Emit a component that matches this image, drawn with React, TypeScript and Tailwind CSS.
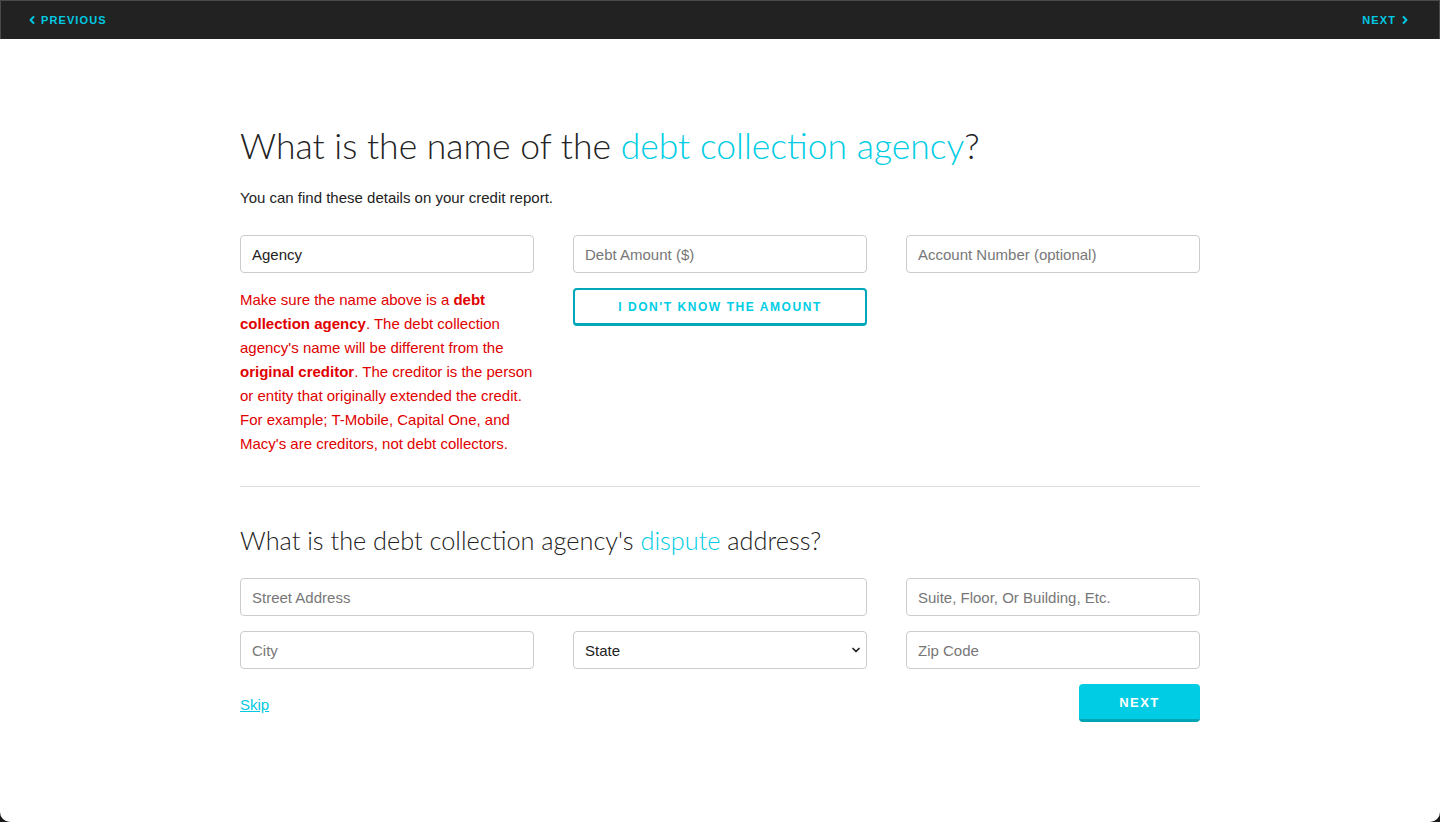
import { ChevronLeft, ChevronRight, ChevronDown } from 'lucide-react'

const body = { fontFamily: '"Liberation Sans", Arial, sans-serif' }
const display = { fontFamily: 'Lato, "Open Sans", sans-serif' }

const inputClass =
  'h-[38px] w-full rounded-[4px] border border-[#cccccc] bg-white px-[11px] text-[15px] text-[#222] placeholder:text-[#777] outline-none'

export default function App() {
  return (
    <div className="min-h-screen bg-[#1a1a1a]" style={body}>
      <div className="flex h-[822px] flex-col overflow-hidden rounded-b-[10px] bg-white">
        <nav className="flex h-[39px] shrink-0 items-center justify-between border-x border-t border-[#4a4a4a] bg-[#222222] pl-[25px] pr-[28px] text-[11px] font-bold uppercase tracking-[0.1em] text-[#00c9e2]">
          <a href="#" className="flex items-center gap-[3px]">
            <ChevronLeft className="h-3 w-3" strokeWidth={4} />
            Previous
          </a>
          <a href="#" className="flex items-center gap-[3px]">
            Next
            <ChevronRight className="h-3 w-3" strokeWidth={4} />
          </a>
        </nav>

        <main className="mx-auto w-[960px] pt-[87px]">
          <h1 className="text-[35.5px] font-light leading-[40px] text-[#222]" style={display}>
            What is the name of the <span className="text-[#00cde4]">debt collection agency</span>?
          </h1>
          <p className="mt-[22px] text-[15px] leading-[20px] text-[#222]">
            You can find these details on your credit report.
          </p>

          <div className="mt-[27px] grid grid-cols-3 gap-x-[39px]">
            <div>
              <input className={inputClass} defaultValue="Agency" />
              <p className="mt-[15px] text-[15px] leading-[24px] text-[#e00000]">
                Make sure the name above is a <strong>debt collection agency</strong>. The debt collection
                agency's name will be different from the <strong>original creditor</strong>. The creditor is
                the person or entity that originally extended the credit. For example; T-Mobile, Capital One,
                and Macy's are creditors, not debt collectors.
              </p>
            </div>
            <div>
              <input className={inputClass} placeholder="Debt Amount ($)" />
              <button className="mt-[15px] h-[38px] w-full rounded-[4px] border-2 border-b-[3px] border-[#00a8b8] bg-white pt-[1px] text-[12px] font-bold uppercase tracking-[0.13em] text-[#00cde4]">
                I don't know the amount
              </button>
            </div>
            <div>
              <input className={inputClass} placeholder="Account Number (optional)" />
            </div>
          </div>

          <hr className="mt-[30px] border-t border-[#dddddd]" />

          <h2 className="mt-[37px] text-[25.3px] font-light leading-[32px] text-[#222]" style={display}>
            What is the debt collection agency's <span className="text-[#00cde4]">dispute</span> address?
          </h2>

          <div className="mt-[22px] grid grid-cols-3 gap-x-[39px] gap-y-[15px]">
            <input className={`${inputClass} col-span-2`} placeholder="Street Address" />
            <input className={inputClass} placeholder="Suite, Floor, Or Building, Etc." />
            <input className={inputClass} placeholder="City" />
            <div className="relative">
              <select className={`${inputClass} appearance-none pt-[2px]`} defaultValue="">
                <option value="">State</option>
                <option>California</option>
                <option>New York</option>
                <option>Texas</option>
              </select>
              <ChevronDown
                className="pointer-events-none absolute right-[5px] top-[13px] h-[12px] w-[12px] text-[#222]"
                strokeWidth={3.5}
              />
            </div>
            <input className={inputClass} placeholder="Zip Code" />
          </div>

          <div className="mt-[15px] flex items-center justify-between">
            <a href="#" className="mt-[4px] text-[15px] text-[#00c9e2] underline">
              Skip
            </a>
            <button className="h-[38px] w-[121px] rounded-[4px] border-b-[3px] border-[#00a5b5] bg-[#00cde4] pt-[3px] text-[13px] font-bold uppercase tracking-[0.11em] text-white">
              Next
            </button>
          </div>
        </main>
      </div>
    </div>
  )
}
